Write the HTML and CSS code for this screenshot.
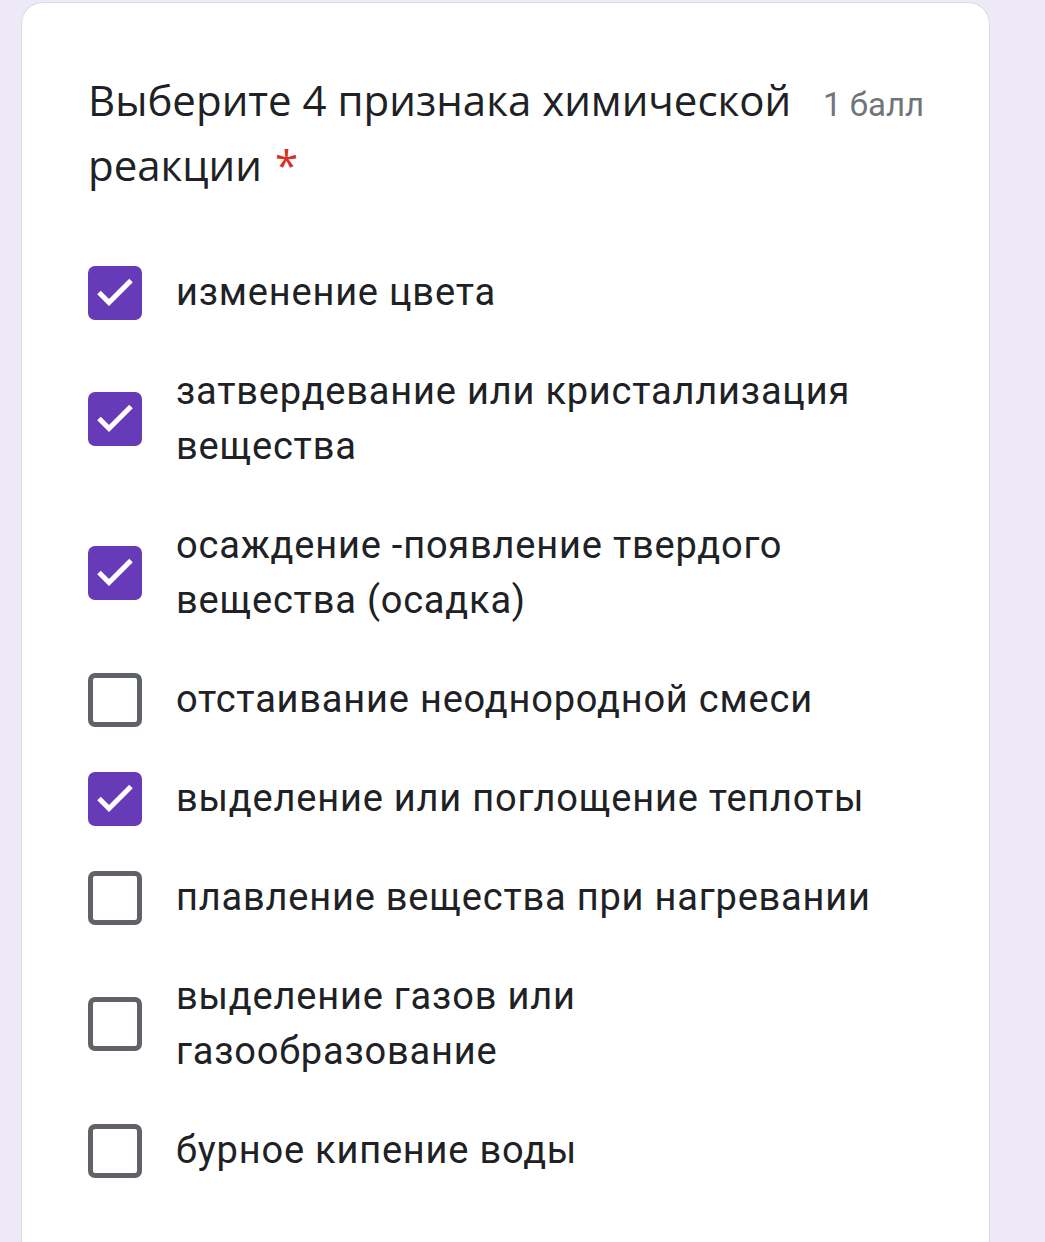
FILE: index.html
```html
<!DOCTYPE html>
<html lang="ru">
<head>
    <meta charset="UTF-8">
    <meta name="viewport" content="width=device-width, initial-scale=1.0">
    <title>Выберите 4 признака химической реакции</title>
    <link rel="stylesheet" href="styles.css">
</head>
<body>
    <div class="question-card">
        <div class="question-header">
            <div class="question-title">Выберите 4 признака химической реакции <span class="required">*</span></div>
            <div class="question-points">1 балл</div>
        </div>

        <div class="options">
            <label class="option checked">
                <span class="box"><svg viewBox="0 0 54 54"><path d="M11 26.5l10 10L43 14.5"/></svg></span>
                <span class="option-text">изменение цвета</span>
            </label>
            <label class="option checked">
                <span class="box"><svg viewBox="0 0 54 54"><path d="M11 26.5l10 10L43 14.5"/></svg></span>
                <span class="option-text">затвердевание или кристаллизация вещества</span>
            </label>
            <label class="option checked">
                <span class="box"><svg viewBox="0 0 54 54"><path d="M11 26.5l10 10L43 14.5"/></svg></span>
                <span class="option-text">осаждение -появление твердого вещества (осадка)</span>
            </label>
            <label class="option">
                <span class="box"></span>
                <span class="option-text">отстаивание неоднородной смеси</span>
            </label>
            <label class="option checked">
                <span class="box"><svg viewBox="0 0 54 54"><path d="M11 26.5l10 10L43 14.5"/></svg></span>
                <span class="option-text">выделение или поглощение теплоты</span>
            </label>
            <label class="option">
                <span class="box"></span>
                <span class="option-text">плавление вещества при нагревании</span>
            </label>
            <label class="option">
                <span class="box"></span>
                <span class="option-text">выделение газов или газообразование</span>
            </label>
            <label class="option">
                <span class="box"></span>
                <span class="option-text">бурное кипение воды</span>
            </label>
        </div>
    </div>
</body>
</html>
```

FILE: styles.css
```css
body {
    margin: 0;
    padding: 2px 0 0 21px;
    background: #ede9f7;
    font-family: 'Roboto', sans-serif;
    color: #202124;
}

.question-card {
    width: 969px;
    min-height: 1260px;
    box-sizing: border-box;
    background: #fff;
    border: 1.5px solid #dadce0;
    border-radius: 22px;
    padding: 64px 40px 0 66px;
}

.question-header {
    display: flex;
    align-items: baseline;
}

.question-title {
    flex: none;
    width: 735px;
    font-family: 'Open Sans', sans-serif;
    font-size: 42px;
    line-height: 65px;
    color: #202124;
}

.required {
    margin-left: 2px;
    color: #d93025;
}

.question-points {
    white-space: nowrap;
    font-size: 33px;
    color: #70757a;
}

.options {
    display: flex;
    flex-direction: column;
    gap: 44px;
    margin-top: 68px;
}

.option {
    display: flex;
    align-items: center;
}

.box {
    flex: none;
    width: 54px;
    height: 54px;
    box-sizing: border-box;
    border: 5px solid #5f6368;
    border-radius: 7px;
}

.option.checked .box {
    background: #673ab7;
    border: none;
}

.box svg {
    display: block;
    width: 54px;
    height: 54px;
    fill: none;
    stroke: #fff;
    stroke-width: 5;
}

.option-text {
    max-width: 700px;
    margin-left: 34px;
    font-size: 38px;
    line-height: 55px;
    letter-spacing: 0.8px;
}
```
